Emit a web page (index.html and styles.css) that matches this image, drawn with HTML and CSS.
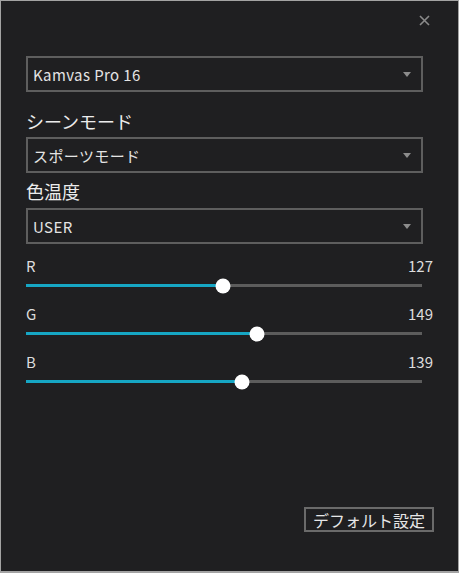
FILE: index.html
```html
<!DOCTYPE html>
<html lang="ja">
<head>
<meta charset="utf-8">
<link rel="stylesheet" href="styles.css">
</head>
<body>
<div class="window">
  <div class="header">
    <svg class="close" width="11" height="11" viewBox="0 0 11 11"><path d="M1 1L10 10M10 1L1 10" stroke="#8a8a8a" stroke-width="1.6" fill="none"/></svg>
  </div>
  <div class="select select-first"><span>Kamvas Pro 16</span><i class="arrow"></i></div>
  <div class="heading heading-first">シーンモード</div>
  <div class="select"><span>スポーツモード</span><i class="arrow"></i></div>
  <div class="heading">色温度</div>
  <div class="select"><span>USER</span><i class="arrow"></i></div>

  <div class="sliders">
    <div class="slider">
      <div class="slider-top"><span>R</span><span>127</span></div>
      <div class="track"><div class="fill" style="width:49.8%"></div><div class="thumb" style="left:49.8%"></div></div>
    </div>
    <div class="slider">
      <div class="slider-top"><span>G</span><span>149</span></div>
      <div class="track"><div class="fill" style="width:58.4%"></div><div class="thumb" style="left:58.4%"></div></div>
    </div>
    <div class="slider">
      <div class="slider-top"><span>B</span><span>139</span></div>
      <div class="track"><div class="fill" style="width:54.5%"></div><div class="thumb" style="left:54.5%"></div></div>
    </div>
  </div>

  <div class="footer"><button class="btn">デフォルト設定</button></div>
</div>
</body>
</html>
```
FILE: styles.css
```css
* { box-sizing: border-box; }
html, body { margin: 0; padding: 0; background: #1f1f21; }
body { font-family: "Noto Sans CJK JP", "Noto Sans", sans-serif; color: #e2e2e2; }
.window {
  width: 459px;
  height: 573px;
  border: 1px solid #a3a3a3;
  border-bottom-width: 2px;
  background: #1f1f21;
  padding: 0 25px 39px 25px;
  display: flex;
  flex-direction: column;
}
.header {
  height: 55px;
  display: flex;
  justify-content: flex-end;
  align-items: flex-start;
}
.close { margin-top: 14px; margin-right: 3px; }
.select {
  width: 397px;
  height: 36px;
  border: 2px solid #5e5e5e;
  display: flex;
  align-items: center;
  justify-content: space-between;
  padding: 0 10px 0 5px;
  font-size: 15px;
  letter-spacing: 0.4px;
  color: #e4e4e4;
}
.arrow {
  width: 0; height: 0;
  border-left: 4px solid transparent;
  border-right: 4px solid transparent;
  border-top: 5px solid #8c8c8c;
}
.heading {
  font-size: 18px;
  line-height: 24px;
  margin: 6px 0 5px 0;
  color: #ececec;
}
.heading-first { margin-top: 17px; margin-bottom: 4px; }
.sliders {
  margin-top: 12px;
  display: flex;
  flex-direction: column;
  gap: 17px;
}
.slider-top {
  display: flex;
  justify-content: space-between;
  font-size: 15px;
  line-height: 20px;
  color: #dcdcdc;
}
.track {
  position: relative;
  width: 396px;
  height: 3px;
  background: #5c5c5c;
  margin-top: 8px;
}
.fill { height: 100%; background: #16a6c4; }
.thumb {
  position: absolute;
  top: 50%;
  width: 15px; height: 15px;
  border-radius: 50%;
  background: #fff;
  transform: translate(-50%, -50%);
}
.footer {
  margin-top: auto;
  display: flex;
  justify-content: flex-end;
  margin-right: -1px;
}
.btn {
  width: 130px;
  height: 25px;
  background: transparent;
  border: 2px solid #6a6a6a;
  color: #e6e6e6;
  font-family: inherit;
  font-size: 16px;
  line-height: 20px;
  padding: 0;
}
```
